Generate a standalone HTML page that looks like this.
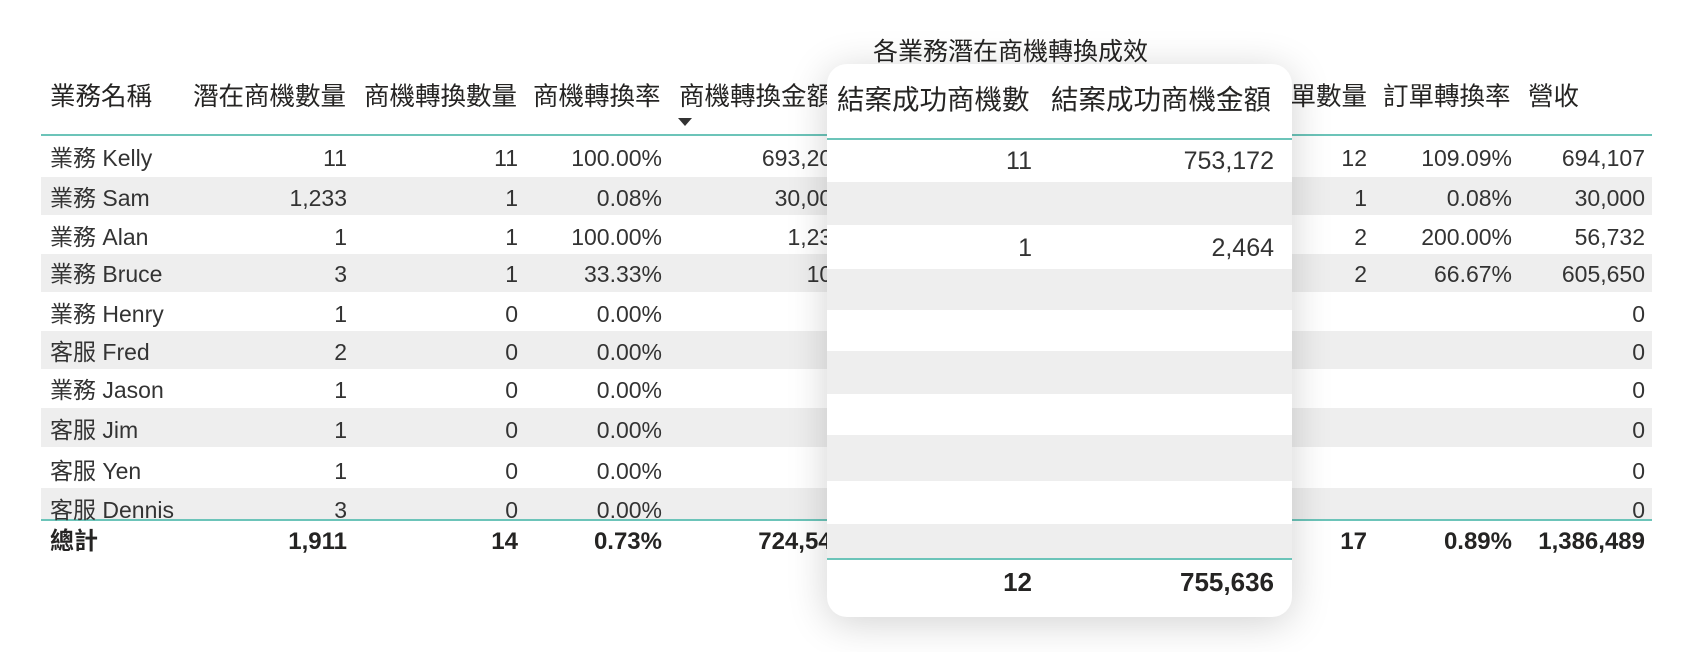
<!DOCTYPE html>
<html><head><meta charset="utf-8"><style>
html,body{margin:0;padding:0;background:#fff;width:1698px;height:652px;overflow:hidden;position:relative;font-family:"Liberation Sans","Noto Sans CJK TC",sans-serif;color:#333;}
.a{position:absolute;white-space:nowrap;line-height:1;}
.r{text-align:right;}
.band{position:absolute;left:41px;width:1611px;background:#eeeeee;}
.h{font-size:25.5px;color:#252423;}
.d{font-size:23px;}
.b{font-weight:bold;font-size:24px;color:#252423;}
.pop{position:absolute;left:827px;top:64px;width:465px;height:553px;background:#fff;border-radius:20px;box-shadow:0 6px 40px rgba(0,0,0,0.18);overflow:hidden;}
.pb{position:absolute;left:0;width:465px;background:#eeeeee;}
</style></head><body>
<div class="a" style="left:873px;top:40px;font-size:25px;color:#252423;">各業務潛在商機轉換成效</div>

<div class="band" style="top:177px;height:38px"></div>
<div class="band" style="top:254px;height:38px"></div>
<div class="band" style="top:331px;height:38px"></div>
<div class="band" style="top:408px;height:39px"></div>
<div class="band" style="top:488px;height:32px"></div>
<div class="a" style="left:41px;top:134px;width:1611px;height:2px;background:#6cc4b9"></div>
<div class="a" style="left:41px;top:519px;width:1611px;height:2px;background:#6cc4b9"></div>

<div class="a h" style="left:50px;top:85px">業務名稱</div>
<div class="a h" style="left:193px;top:85px">潛在商機數量</div>
<div class="a h" style="left:364px;top:85px">商機轉換數量</div>
<div class="a h" style="left:533px;top:85px">商機轉換率</div>
<div class="a h" style="left:679px;top:85px">商機轉換金額</div>
<div class="a" style="left:678px;top:118px;width:0;height:0;border-left:7px solid transparent;border-right:7px solid transparent;border-top:8px solid #333"></div>
<div class="a h r" style="right:331px;top:85px">訂單數量</div>
<div class="a h" style="left:1383px;top:85px">訂單轉換率</div>
<div class="a h" style="left:1528px;top:85px">營收</div>

<div id="rows"></div>
<script>
var data=[
["業務 Kelly","11","11","100.00%","693,208","12","109.09%","694,107",157],
["業務 Sam","1,233","1","0.08%","30,000","1","0.08%","30,000",197],
["業務 Alan","1","1","100.00%","1,232","2","200.00%","56,732",236],
["業務 Bruce","3","1","33.33%","100","2","66.67%","605,650",273],
["業務 Henry","1","0","0.00%","","","","0",313],
["客服 Fred","2","0","0.00%","","","","0",351],
["業務 Jason","1","0","0.00%","","","","0",389],
["客服 Jim","1","0","0.00%","","","","0",429],
["客服 Yen","1","0","0.00%","","","","0",470],
["客服 Dennis","3","0","0.00%","","","","0",509]];
var rights=[347,518,662,845,1367,1512,1645];
var h="";
data.forEach(function(r){
 var t=r[8]-10;
 h+='<div class="a d" style="left:50px;top:'+t+'px">'+r[0]+'</div>';
 for(var i=1;i<8;i++){ if(r[i]) h+='<div class="a d r" style="right:'+(1698-rights[i-1])+'px;top:'+t+'px">'+r[i]+'</div>';}
});
var tot=["1,911","14","0.73%","724,540","17","0.89%","1,386,489"];
h+='<div class="a b" style="left:50px;top:530px">總計</div>';
tot.forEach(function(v,i){h+='<div class="a b r" style="right:'+(1698-rights[i])+'px;top:530px">'+v+'</div>';});
document.getElementById("rows").innerHTML=h;
</script>

<div class="pop">
 <div class="a" style="left:10px;top:22px;font-size:27.5px;color:#252423">結案成功商機數</div>
 <div class="a" style="left:224px;top:22px;font-size:27.5px;color:#252423">結案成功商機金額</div>
 <div class="a" style="left:0;top:74px;width:465px;height:2px;background:#6cc4b9"></div>
 <div class="pb" style="top:118px;height:43px"></div>
 <div class="pb" style="top:205px;height:41px"></div>
 <div class="pb" style="top:287px;height:43px"></div>
 <div class="pb" style="top:371px;height:46px"></div>
 <div class="pb" style="top:460px;height:35px"></div>
 <div class="a" style="left:0;top:494px;width:465px;height:2px;background:#6cc4b9"></div>
 <div class="a r" style="right:260px;top:85px;font-size:25px">11</div>
 <div class="a r" style="right:18px;top:85px;font-size:25px">753,172</div>
 <div class="a r" style="right:260px;top:172px;font-size:25px">1</div>
 <div class="a r" style="right:18px;top:172px;font-size:25px">2,464</div>
 <div class="a r" style="right:260px;top:505px;font-size:26px;font-weight:bold;color:#252423">12</div>
 <div class="a r" style="right:18px;top:505px;font-size:26px;font-weight:bold;color:#252423">755,636</div>
</div>
</body></html>
